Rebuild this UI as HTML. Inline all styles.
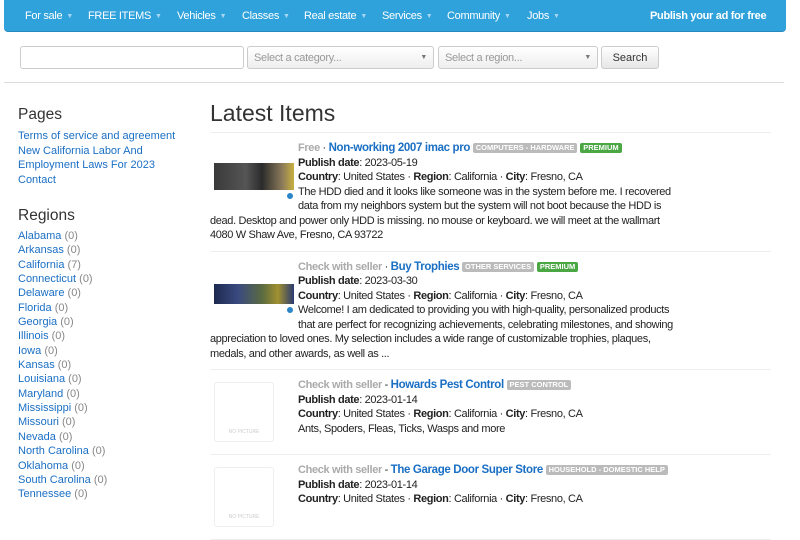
<!DOCTYPE html>
<html><head><meta charset="utf-8"><style>
*{box-sizing:border-box}
body{margin:0;width:800px;height:500px;overflow:hidden;background:#fff;font-family:"Liberation Sans",Arial,sans-serif;font-size:11px;color:#222}
a{color:#1a6fc4;text-decoration:none}
.nav{position:absolute;left:4px;top:0;width:782px;height:32px;background:#2fa2dc;border-radius:0 0 4px 4px;border-bottom:1px solid #2688bd}
.nav span{position:absolute;top:10px;color:#fff;font-size:11px;letter-spacing:-0.3px}
.nav span i{font-style:normal;color:#a8d6f0;font-size:7px;margin-left:4px;vertical-align:1px}
.inp{position:absolute;top:46px;height:23px;border:1px solid #ccc;border-radius:3px;background:#fff;color:#999;font-size:11px;padding:5px 6px;letter-spacing:-0.3px}
.sel{background:linear-gradient(#fff,#eee)}
.sel b{position:absolute;right:6px;top:7px;font-size:7px;color:#777;font-weight:normal}
.btn{position:absolute;left:601px;top:46px;width:58px;height:23px;border:1px solid #ccc;border-radius:3px;background:linear-gradient(#fff,#e6e6e6);font-size:11px;text-align:center;padding-top:5px;color:#333}
.hr{position:absolute;left:4px;top:82px;width:780px;border-top:1px solid #ddd}
.side{position:absolute;left:18px;top:105px;width:180px;line-height:14.5px}
.side h3{font-size:15.5px;font-weight:normal;margin:0 0 4px;color:#333;line-height:20px}
.side .c{color:#888}
.main{position:absolute;left:210px;top:98px;width:561px}
.main h1{font-size:23px;font-weight:normal;margin:0;line-height:30px;height:35px;color:#333;border-bottom:1px solid #eee}
.item{border-bottom:1px solid #eee;padding:8px 0;line-height:14.5px;overflow:hidden;letter-spacing:-0.35px}
.w{width:474px}
.th{float:left;width:88px;height:70px;position:relative}
.ph{float:left;width:88px;height:64px;position:relative;margin-top:4px}
.ph div{position:absolute;left:4px;top:0;width:60px;height:60px;border:1px solid #eee;border-radius:3px;color:#ccc;font-size:5px;text-align:center;padding-top:42px;letter-spacing:0}
.dot{position:absolute;left:77px;width:6px;height:6px;border-radius:50%;background:#2a86c8}
.g{color:#aaa;font-weight:bold}
.t{font-weight:bold;font-size:11.5px}
.lb{display:inline-block;font-size:7.5px;font-weight:bold;color:#fff;background:#bbb;border-radius:2px;padding:0 3px;line-height:10px;vertical-align:1px;letter-spacing:0}
.pr{background:#4aa744}
</style></head><body>
<div class="nav">
<span style="left:21px">For sale<i>▼</i></span>
<span style="left:84px">FREE ITEMS<i>▼</i></span>
<span style="left:173px">Vehicles<i>▼</i></span>
<span style="left:238px">Classes<i>▼</i></span>
<span style="left:300px">Real estate<i>▼</i></span>
<span style="left:378px">Services<i>▼</i></span>
<span style="left:443px">Community<i>▼</i></span>
<span style="left:523px">Jobs<i>▼</i></span>
<span style="left:646px;font-weight:bold">Publish your ad for free</span>
</div>
<div class="inp" style="left:20px;width:224px"></div>
<div class="inp sel" style="left:247px;width:187px">Select a category...<b>▼</b></div>
<div class="inp sel" style="left:438px;width:160px">Select a region...<b>▼</b></div>
<div class="btn">Search</div>
<div class="hr"></div>
<div class="side">
<h3>Pages</h3>
<a>Terms of service and agreement</a><br><a>New California Labor And<br>Employment Laws For 2023</a><br><a>Contact</a>
<h3 style="margin-top:19px;margin-bottom:3px">Regions</h3>
<div style="line-height:14.35px">
<a>Alabama</a> <span class="c">(0)</span><br><a>Arkansas</a> <span class="c">(0)</span><br><a>California</a> <span class="c">(7)</span><br><a>Connecticut</a> <span class="c">(0)</span><br><a>Delaware</a> <span class="c">(0)</span><br><a>Florida</a> <span class="c">(0)</span><br><a>Georgia</a> <span class="c">(0)</span><br><a>Illinois</a> <span class="c">(0)</span><br><a>Iowa</a> <span class="c">(0)</span><br><a>Kansas</a> <span class="c">(0)</span><br><a>Louisiana</a> <span class="c">(0)</span><br><a>Maryland</a> <span class="c">(0)</span><br><a>Mississippi</a> <span class="c">(0)</span><br><a>Missouri</a> <span class="c">(0)</span><br><a>Nevada</a> <span class="c">(0)</span><br><a>North Carolina</a> <span class="c">(0)</span><br><a>Oklahoma</a> <span class="c">(0)</span><br><a>South Carolina</a> <span class="c">(0)</span><br><a>Tennessee</a> <span class="c">(0)</span>
</div></div>
<div class="main">
<h1>Latest Items</h1>
<div class="item"><div class="w">
<div class="th"><div style="position:absolute;left:4px;top:22px;width:80px;height:27px;background:linear-gradient(90deg,#3a3a3a,#555 40%,#2b2b2b 60%,#8a7a5a 85%,#c8b040)"></div><div class="dot" style="top:52px"></div></div>
<span class="g">Free</span> · <a class="t">Non-working 2007 imac pro</a> <span class="lb">COMPUTERS - HARDWARE</span> <span class="lb pr">PREMIUM</span><br>
<b>Publish date</b>: 2023-05-19<br><b>Country</b>: United States · <b>Region</b>: California · <b>City</b>: Fresno, CA<br>
The HDD died and it looks like someone was in the system before me. I recovered data from my neighbors system but the system will not boot because the HDD is dead. Desktop and power only HDD is missing. no mouse or keyboard. we will meet at the wallmart 4080 W Shaw Ave, Fresno, CA 93722
</div></div>
<div class="item"><div class="w">
<div class="th"><div style="position:absolute;left:4px;top:24px;width:80px;height:20px;background:linear-gradient(90deg,#1c2a50,#3a4a80 30%,#5a6a40 60%,#a09030 80%,#2a3a70)"></div><div class="dot" style="top:47px"></div></div>
<span class="g">Check with seller</span> · <a class="t">Buy Trophies</a> <span class="lb">OTHER SERVICES</span> <span class="lb pr">PREMIUM</span><br>
<b>Publish date</b>: 2023-03-30<br><b>Country</b>: United States · <b>Region</b>: California · <b>City</b>: Fresno, CA<br>
Welcome! I am dedicated to providing you with high-quality, personalized products that are perfect for recognizing achievements, celebrating milestones, and showing appreciation to loved ones. My selection includes a wide range of customizable trophies, plaques, medals, and other awards, as well as ...
</div></div>
<div class="item"><div class="w">
<div class="ph"><div>NO PICTURE</div></div>
<span class="g">Check with seller</span> - <a class="t">Howards Pest Control</a> <span class="lb">PEST CONTROL</span><br>
<b>Publish date</b>: 2023-01-14<br><b>Country</b>: United States · <b>Region</b>: California · <b>City</b>: Fresno, CA<br>
Ants, Spoders, Fleas, Ticks, Wasps and more
</div></div>
<div class="item"><div class="w">
<div class="ph"><div>NO PICTURE</div></div>
<span class="g">Check with seller</span> - <a class="t">The Garage Door Super Store</a> <span class="lb">HOUSEHOLD - DOMESTIC HELP</span><br>
<b>Publish date</b>: 2023-01-14<br><b>Country</b>: United States · <b>Region</b>: California · <b>City</b>: Fresno, CA
</div></div>
</div>
</body></html>
